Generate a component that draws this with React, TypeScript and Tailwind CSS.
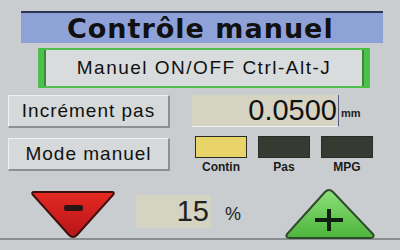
import * as React from 'react';

function Indicator({ on, label }: { on?: boolean; label: string }) {
  return (
    <div className="flex w-[52px] flex-col items-center">
      <div
        className={`h-[22px] w-[52px] border border-[#2a2c26] ${
          on ? 'bg-[#e8d468]' : 'bg-[#363a30]'
        }`}
      />
      <span className="mt-[2px] text-[12px] leading-[14px] font-bold text-[#1b1b1b]">
        {label}
      </span>
    </div>
  );
}

function SideButton({ children }: { children: React.ReactNode }) {
  return (
    <div className="flex h-[33px] w-[162px] items-center justify-center border-t border-l border-[#eef0f0] border-r-2 border-b-2 border-r-[#8c9090] border-b-[#8c9090] bg-[#d6d9d9] text-[19px] tracking-[1px] text-[#111]">
      {children}
    </div>
  );
}

export default function App() {
  return (
    <div
      className="flex h-[250px] w-[400px] flex-col bg-[#c9cdcf]"
      style={{ fontFamily: '"Liberation Sans", Arial, sans-serif' }}
    >
      <div className="mt-[11px] ml-[21px] flex h-[32px] w-[362px] items-center border-t-2 border-[#2e3550] bg-[#8fa2d8] pl-[46px]">
        <span
          className="text-[27px] leading-none font-bold tracking-[1px] text-[#111]"
          style={{ fontFamily: '"DejaVu Sans", Verdana, sans-serif' }}
        >
          Contrôle manuel
        </span>
      </div>

      <div className="mt-[5px] ml-[38px] flex h-[40px] w-[332px] border-y-2 border-x-[6px] border-[#4cbf4c] bg-[#d9dcdc]">
        <div className="flex flex-1 items-center justify-center border-x-2 border-x-[#3a8a3a] text-[19px] tracking-[1.5px] text-[#111]">
          Manuel ON/OFF Ctrl-Alt-J
        </div>
      </div>

      <div className="mt-[7px] flex">
        <div className="ml-[8px] flex flex-col gap-[10px]">
          <SideButton>Incrément pas</SideButton>
          <SideButton>Mode manuel</SideButton>
        </div>
        <div className="ml-[22px] flex flex-col">
          <div className="flex items-end">
            <div className="flex h-[32px] w-[147px] items-center justify-end border-b border-[#f2f2f0] border-r border-r-[#5a5a8a] bg-[#d5d3c2] pr-[1px] text-[29px] leading-none text-[#111]">
              0.0500
            </div>
            <span className="ml-[2px] mb-[6px] text-[11px] font-bold text-[#222]">mm</span>
          </div>
          <div className="mt-[9px] ml-[3px] flex gap-[11px]">
            <Indicator on label="Contin" />
            <Indicator label="Pas" />
            <Indicator label="MPG" />
          </div>
        </div>
      </div>

      <div className="mt-[14px] flex h-[52px] items-start border-b-2 border-[#8a8e90]">
        <svg width="86" height="50" viewBox="0 0 86 50" className="mt-[1px] ml-[30px]">
          <defs>
            <linearGradient id="rg" x1="0" y1="0" x2="0" y2="1">
              <stop offset="0" stopColor="#e42a22" />
              <stop offset="1" stopColor="#b8141a" />
            </linearGradient>
          </defs>
          <path d="M4 3 L82 3 Q85 3 83 6 L47 46 Q43 50 39 46 L3 6 Q1 3 4 3 Z" fill="url(#rg)" stroke="#3a1010" strokeWidth="2" />
          <rect x="34" y="16" width="19" height="6" rx="2" fill="#2a1414" />
        </svg>

        <div className="mt-[7px] ml-[20px] flex h-[33px] w-[75px] items-center justify-end bg-[#d5d3c2] pr-[2px] text-[29px] leading-none text-[#222]">
          15
        </div>
        <span className="mt-[13px] ml-[14px] text-[18px] text-[#222]">%</span>

        <svg width="92" height="52" viewBox="0 0 92 52" className="ml-[43px]">
          <defs>
            <linearGradient id="gg" x1="0" y1="0" x2="0" y2="1">
              <stop offset="0" stopColor="#8ee07a" />
              <stop offset="1" stopColor="#4cb43a" />
            </linearGradient>
          </defs>
          <path d="M41 4 Q45 0 49 4 L89 46 Q91 50 86 50 L6 50 Q1 50 3 46 Z" fill="url(#gg)" stroke="#2e4a2a" strokeWidth="2" />
          <rect x="31" y="30" width="28" height="4" fill="#102010" />
          <rect x="43" y="21" width="4" height="22" fill="#102010" />
        </svg>
      </div>
    </div>
  );
}
